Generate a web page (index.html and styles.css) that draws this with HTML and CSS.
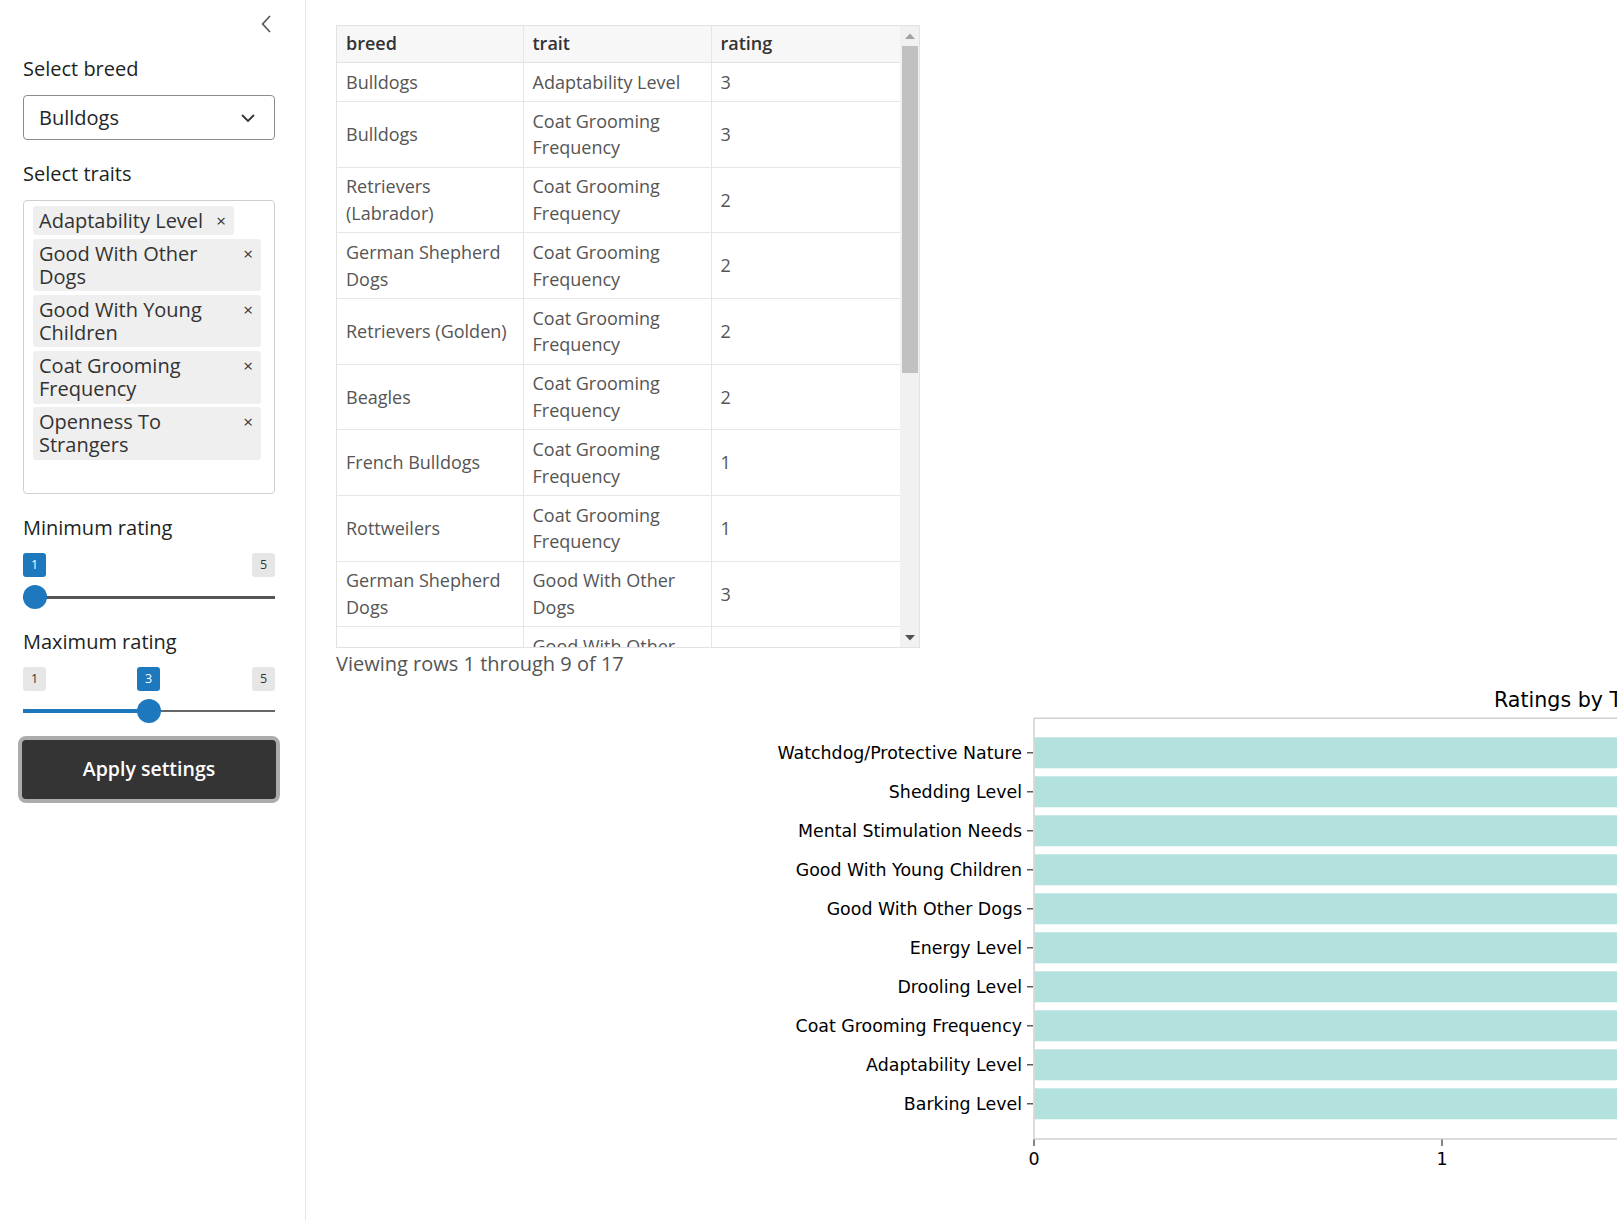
FILE: index.html
```html
<!DOCTYPE html>
<html lang="en">
<head>
<meta charset="utf-8">
<title>Dog breed traits</title>
<link rel="stylesheet" href="styles.css">
</head>
<body>
<div class="layout">
  <aside class="sidebar">
    <div class="collapse-row">
      <svg class="collapse-icon" width="10" height="18" viewBox="0 0 10 18"><path d="M9 1 L1.6 9 L9 17" fill="none" stroke="#555" stroke-width="1.6"/></svg>
    </div>

    <div class="field field-select">
      <label class="field-label">Select breed</label>
      <div class="select">
        <span>Bulldogs</span>
        <svg width="14" height="8" viewBox="0 0 14 8"><path d="M1 1 L7 7 L13 1" fill="none" stroke="#333" stroke-width="1.8"/></svg>
      </div>
    </div>

    <div class="field field-multi">
      <label class="field-label">Select traits</label>
      <div class="multi">
        <div class="tag"><span class="tag-text">Adaptability Level</span><span class="tag-x">×</span></div>
        <div class="tag"><span class="tag-text">Good With Other Dogs</span><span class="tag-x">×</span></div>
        <div class="tag"><span class="tag-text">Good With Young Children</span><span class="tag-x">×</span></div>
        <div class="tag"><span class="tag-text">Coat Grooming Frequency</span><span class="tag-x">×</span></div>
        <div class="tag"><span class="tag-text">Openness To Strangers</span><span class="tag-x">×</span></div>
        <div class="multi-input"></div>
      </div>
    </div>

    <div class="field field-slider field-slider-min">
      <label class="field-label slider-label">Minimum rating</label>
      <div class="slider">
        <div class="slider-marks"><span class="mark mark-current">1</span><span class="mark">5</span></div>
        <div class="track track-dark"></div>
        <div class="handle" style="left:0px"></div>
      </div>
    </div>

    <div class="field field-slider field-slider-max">
      <label class="field-label slider-label">Maximum rating</label>
      <div class="slider">
        <div class="slider-marks"><span class="mark">1</span><span class="mark">5</span></div>
        <span class="mark mark-current mark-float" style="left:114px">3</span>
        <div class="track track-light"></div>
        <div class="bar" style="width:126px"></div>
        <div class="handle" style="left:114px"></div>
      </div>
    </div>

    <button class="apply">Apply settings</button>
  </aside>

  <main class="main">
    <div class="grid">
      <div class="grid-view">
        <table class="data">
          <colgroup><col class="c1"><col class="c2"><col class="c3"></colgroup>
          <thead>
            <tr><th>breed</th><th>trait</th><th>rating</th></tr>
          </thead>
          <tbody>
            <tr><td>Bulldogs</td><td>Adaptability Level</td><td>3</td></tr>
            <tr><td>Bulldogs</td><td>Coat Grooming Frequency</td><td>3</td></tr>
            <tr><td>Retrievers (Labrador)</td><td>Coat Grooming Frequency</td><td>2</td></tr>
            <tr><td>German Shepherd Dogs</td><td>Coat Grooming Frequency</td><td>2</td></tr>
            <tr><td>Retrievers (Golden)</td><td>Coat Grooming Frequency</td><td>2</td></tr>
            <tr><td>Beagles</td><td>Coat Grooming Frequency</td><td>2</td></tr>
            <tr><td>French Bulldogs</td><td>Coat Grooming Frequency</td><td>1</td></tr>
            <tr><td>Rottweilers</td><td>Coat Grooming Frequency</td><td>1</td></tr>
            <tr><td>German Shepherd Dogs</td><td>Good With Other Dogs</td><td>3</td></tr>
            <tr><td></td><td>Good With Other Dogs</td><td></td></tr>
          </tbody>
        </table>
      </div>
      <div class="scrollbar">
        <div class="sb-btn"><svg width="10" height="6" viewBox="0 0 10 6"><polygon points="0,6 5,0.5 10,6" fill="#a3a3a3"/></svg></div>
        <div class="sb-track"><div class="sb-thumb"></div></div>
        <div class="sb-btn"><svg width="10" height="6" viewBox="0 0 10 6"><polygon points="0,0 10,0 5,5.5" fill="#505050"/></svg></div>
      </div>
    </div>
    <div class="grid-foot">Viewing rows 1 through 9 of 17</div>

    <svg class="chart" width="1300" height="540" viewBox="0 0 1300 540">
      <text class="chart-title" x="1158" y="29.7">Ratings by Trait</text>
      <g fill="#b3e2de">
        <rect x="698.5" y="60.3" width="700" height="31"/>
        <rect x="698.5" y="99.3" width="700" height="31"/>
        <rect x="698.5" y="138.3" width="700" height="31"/>
        <rect x="698.5" y="177.3" width="700" height="31"/>
        <rect x="698.5" y="216.3" width="700" height="31"/>
        <rect x="698.5" y="255.3" width="700" height="31"/>
        <rect x="698.5" y="294.3" width="700" height="31"/>
        <rect x="698.5" y="333.3" width="700" height="31"/>
        <rect x="698.5" y="372.3" width="700" height="31"/>
        <rect x="698.5" y="411.3" width="700" height="31"/>
      </g>
      <g stroke="#d0d0d0" stroke-width="1.5" fill="none">
        <line x1="698" y1="41.3" x2="1300" y2="41.3"/>
        <line x1="698" y1="41.3" x2="698" y2="462"/>
        <line x1="698" y1="462" x2="1300" y2="462"/>
      </g>
      <g stroke="#333" stroke-width="1.2">
        <line x1="691" y1="75.8" x2="697" y2="75.8"/>
        <line x1="691" y1="114.8" x2="697" y2="114.8"/>
        <line x1="691" y1="153.8" x2="697" y2="153.8"/>
        <line x1="691" y1="192.8" x2="697" y2="192.8"/>
        <line x1="691" y1="231.8" x2="697" y2="231.8"/>
        <line x1="691" y1="270.8" x2="697" y2="270.8"/>
        <line x1="691" y1="309.8" x2="697" y2="309.8"/>
        <line x1="691" y1="348.8" x2="697" y2="348.8"/>
        <line x1="691" y1="387.8" x2="697" y2="387.8"/>
        <line x1="691" y1="426.8" x2="697" y2="426.8"/>
        <line x1="698" y1="462.5" x2="698" y2="469"/>
        <line x1="1106" y1="462.5" x2="1106" y2="469"/>
      </g>
      <g class="ylab" text-anchor="end">
        <text x="686" y="82.2">Watchdog/Protective Nature</text>
        <text x="686" y="121.2">Shedding Level</text>
        <text x="686" y="160.2">Mental Stimulation Needs</text>
        <text x="686" y="199.2">Good With Young Children</text>
        <text x="686" y="238.2">Good With Other Dogs</text>
        <text x="686" y="277.2">Energy Level</text>
        <text x="686" y="316.2">Drooling Level</text>
        <text x="686" y="355.2">Coat Grooming Frequency</text>
        <text x="686" y="394.2">Adaptability Level</text>
        <text x="686" y="433.2">Barking Level</text>
      </g>
      <g class="xlab" text-anchor="middle">
        <text x="698" y="488">0</text>
        <text x="1106" y="488">1</text>
      </g>
    </svg>
  </main>
</div>
</body>
</html>
```

FILE: styles.css
```css
* { box-sizing: border-box; }

html, body {
  margin: 0;
  padding: 0;
  background: #ffffff;
}

body {
  font-family: "Open Sans", "Noto Sans", sans-serif;
  color: #1d1f21;
}

.layout {
  display: flex;
  height: 1220px;
  overflow: hidden;
}

/* ---------- sidebar ---------- */
.sidebar {
  width: 306px;
  flex: none;
  border-right: 1px solid #e6e6e6;
  padding: 15px 30px 0 23px;
}

.collapse-row {
  display: flex;
  justify-content: flex-end;
  padding-right: 4px;
  height: 18px;
  margin-bottom: 21px;
}

.collapse-icon { display: block; }

.field-label {
  display: block;
  font-size: 20px;
  line-height: 30px;
  margin-bottom: 11px;
}

.field-select { margin-bottom: 19px; }
.field-multi { margin-bottom: 19px; }

.select {
  height: 45px;
  border: 1px solid #8c8c8c;
  border-radius: 4px;
  display: flex;
  align-items: center;
  justify-content: space-between;
  padding: 0 19px 0 15px;
  font-size: 20px;
  line-height: 30px;
  color: #212529;
}

.select svg { display: block; }

.multi {
  border: 1px solid #cfcfcf;
  border-radius: 4px;
  padding: 5px 13px 2px 9px;
  display: flex;
  flex-direction: column;
  align-items: flex-start;
  gap: 3.5px;
}

.tag {
  display: flex;
  align-items: flex-start;
  gap: 13px;
  max-width: 100%;
  background: #efefef;
  border-radius: 3px;
  padding: 3px 8px 3px 6px;
  font-size: 20px;
  line-height: 23.3px;
  color: #333333;
}

.tag-text { flex: 1 1 auto; min-width: 0; }

.tag-x {
  flex: none;
  font-size: 17px;
  line-height: 23.3px;
  color: #333333;
}

.multi-input { height: 28px; }

/* ---------- sliders ---------- */
.slider-label { margin-bottom: 10px; }
.field-slider-min { margin-bottom: 18px; }
.field-slider-max { margin-bottom: 12.5px; }

.slider {
  position: relative;
  height: 56px;
}

.slider-marks {
  display: flex;
  justify-content: space-between;
}

.mark {
  display: block;
  min-width: 23px;
  height: 24px;
  line-height: 24px;
  text-align: center;
  font-size: 12.5px;
  background: #e6e6e6;
  color: #333333;
  border-radius: 3px;
}

.mark-current {
  background: #1e78be;
  color: #ffffff;
}

.mark-float {
  position: absolute;
  top: 0;
}

.track {
  position: absolute;
  left: 0;
  right: 0;
}

.track-dark {
  top: 42.5px;
  height: 3px;
  background: #555555;
}

.track-light {
  top: 43px;
  height: 2px;
  background: #666666;
}

.bar {
  position: absolute;
  left: 0;
  top: 42px;
  height: 4px;
  background: #1e78be;
}

.handle {
  position: absolute;
  top: 32px;
  width: 24px;
  height: 24px;
  border-radius: 50%;
  background: #1e78be;
}

.apply {
  display: block;
  width: calc(100% + 10px);
  margin: 0 -5px;
  height: 67px;
  border: 4px solid #acacac;
  border-radius: 8px;
  background: #343434;
  color: #ffffff;
  font-family: "Open Sans", "Noto Sans", sans-serif;
  font-size: 19.5px;
  font-weight: 600;
  line-height: 30px;
  padding: 0;
}

/* ---------- main ---------- */
.main {
  flex: 1;
  min-width: 0;
  overflow: hidden;
  padding: 25px 0 0 30px;
}

.grid {
  display: flex;
  width: 584px;
  height: 623px;
  border: 1px solid #e2e2e2;
}

.grid-view {
  flex: 1;
  min-width: 0;
  overflow: hidden;
}

.data {
  width: 100%;
  border-collapse: collapse;
  table-layout: fixed;
  font-size: 18px;
  line-height: 26.7px;
  color: #555555;
}

.c1 { width: 186px; }
.c2 { width: 188px; }

.data th {
  background: #f7f7f7;
  font-weight: 600;
  color: #333333;
  text-align: left;
  padding: 4.15px 9px 5.15px;
  border-bottom: 1px solid #e2e2e2;
}

.data td {
  padding: 5.65px 9px;
  border-bottom: 1px solid #e6e6e6;
  vertical-align: middle;
}

.data th + th,
.data td + td {
  border-left: 1px solid #e6e6e6;
}

.scrollbar {
  width: 19px;
  flex: none;
  background: #f1f1f1;
  display: flex;
  flex-direction: column;
}

.sb-btn {
  height: 19px;
  flex: none;
  display: flex;
  align-items: center;
  justify-content: center;
}

.sb-btn svg { display: block; }

.sb-track {
  flex: 1;
  padding: 1px 1px 0 2px;
}

.sb-thumb {
  height: 327px;
  background: #c1c1c1;
}

.grid-foot {
  font-size: 20px;
  line-height: 27px;
  margin-top: 2px;
  color: #555555;
}

.chart {
  display: block;
  overflow: hidden;
}

.chart text {
  font-family: "DejaVu Sans", sans-serif;
  fill: #000000;
}

.chart-title { font-size: 20.6px; }
.ylab text, .xlab text { font-size: 17.4px; }
```
